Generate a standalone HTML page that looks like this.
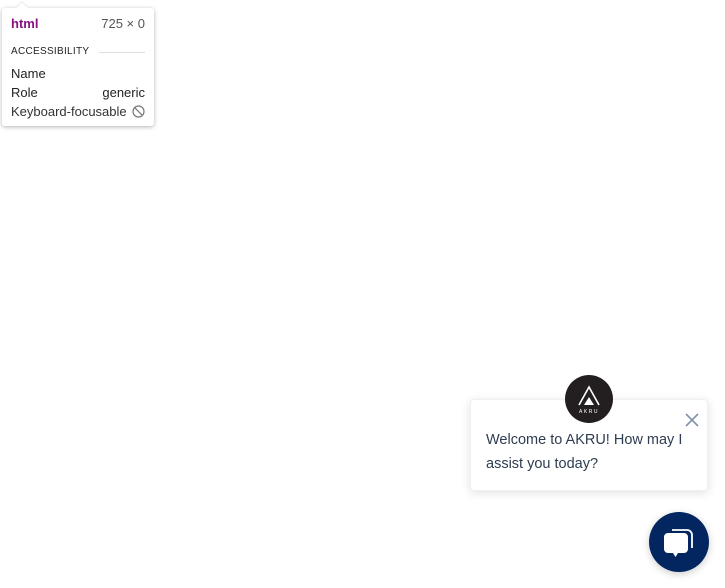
<!DOCTYPE html>
<html><head><meta charset="utf-8"><style>
html,body{margin:0;padding:0;width:725px;height:588px;background:#fff;overflow:hidden;font-family:"Liberation Sans",Arial,sans-serif;position:relative}
.tip{position:absolute;left:2px;top:8px;width:152px;height:118px;background:#fff;border-radius:3px;box-shadow:0 1px 4px rgba(0,0,0,.3);font-size:13px;color:#222}
.tip:before{content:"";position:absolute;left:14px;top:-6px;width:0;height:0;border-left:6px solid transparent;border-right:6px solid transparent;border-bottom:6px solid #fff;filter:drop-shadow(0 -1px 0 rgba(0,0,0,.1))}
.row{position:absolute;left:9px;right:9px}
.card{position:absolute;left:470px;top:399px;width:238px;height:92px;background:#fff;border-radius:4px;box-shadow:0 2px 10px rgba(0,0,0,.12);border:1px solid #eef0f3;box-sizing:border-box}
.card p{margin:0;position:absolute;left:15px;top:28px;width:212px;font-size:14.5px;line-height:24px;color:#2e3d52}
.av{position:absolute;left:565px;top:375px;width:48px;height:48px;border-radius:50%;background:#231f20}
.btn{position:absolute;left:649px;top:512px;width:60px;height:60px;border-radius:50%;background:#032660;box-shadow:0 2px 8px rgba(0,0,0,.2)}
</style></head><body>
<div class="tip">
 <div class="row" style="top:8px"><b style="color:#881280">html</b><span style="float:right;color:#555">725 × 0</span></div>
 <div class="row" style="top:38px;font-size:10px;letter-spacing:.3px;color:#222">ACCESSIBILITY<span style="position:absolute;left:88px;right:0;top:6px;border-top:1px solid #ddd"></span></div>
 <div class="row" style="top:58px">Name</div>
 <div class="row" style="top:77px">Role<span style="float:right">generic</span></div>
 <div class="row" style="top:96px;color:#333">Keyboard-focusable<svg style="position:absolute;right:0;top:1px" width="13" height="13" viewBox="0 0 13 13"><circle cx="6.5" cy="6.5" r="5.5" fill="none" stroke="#777" stroke-width="1.2"/><line x1="2.6" y1="2.6" x2="10.4" y2="10.4" stroke="#777" stroke-width="1.2"/></svg></div>
</div>
<div class="card"><p>Welcome to AKRU! How may I assist you today?</p>
<svg style="position:absolute;left:214px;top:13px" width="14" height="14" viewBox="0 0 14 14"><path d="M1 1L13 13M13 1L1 13" stroke="#7f93ab" stroke-width="1.6"/></svg></div>
<div class="av"><svg width="48" height="48" viewBox="0 0 48 48"><path d="M14 30L24 12L34 30" fill="none" stroke="#fff" stroke-width="1.6"/><path d="M19 30L24 22L29 30Z" fill="#fff"/><text x="24" y="38" font-size="5" fill="#fff" text-anchor="middle" font-family="Liberation Sans" letter-spacing="1.5">AKRU</text></svg></div>
<div class="btn"><svg width="60" height="60" viewBox="0 0 60 60"><path d="M23 18h15a5 5 0 0 1 5 5v13" fill="none" stroke="#fff" stroke-width="1.8"/><path d="M19 21h16a4 4 0 0 1 4 4v12a4 4 0 0 1-4 4h-6l-2.5 4-2.5-4h-5a4 4 0 0 1-4-4v-12a4 4 0 0 1 4-4z" fill="#fff"/></svg></div>
</body></html>
